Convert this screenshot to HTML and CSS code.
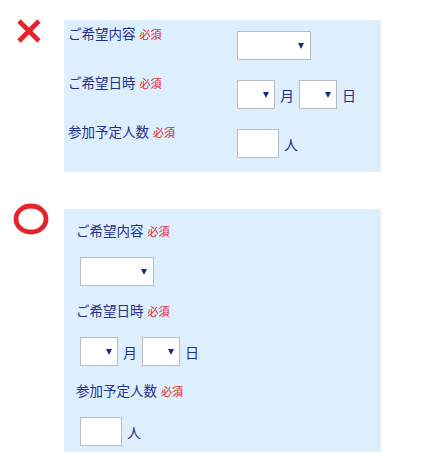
FILE: index.html
```html
<!DOCTYPE html>
<html lang="ja">
<head>
<meta charset="utf-8">
<title>フォーム例</title>
<link rel="stylesheet" href="styles.css">
</head>
<body>
<div class="block block-bad">
  <div class="mark">
    <svg class="mark-x" width="26" height="26" viewBox="0 0 26 26"><path d="M3 3 L23 23 M23 3 L3 23" stroke="#e5232a" stroke-width="4.6" stroke-linecap="butt" fill="none"/></svg>
  </div>
  <div class="panel panel-table">
    <div class="label">ご希望内容<span class="req">必須</span></div>
    <div class="ctrl"><div class="select wide"><span class="arrow"></span></div></div>
    <div class="label">ご希望日時<span class="req">必須</span></div>
    <div class="ctrl"><div class="select small"><span class="arrow"></span></div><span class="unit">月</span><div class="select small"><span class="arrow"></span></div><span class="unit">日</span></div>
    <div class="label">参加予定人数<span class="req">必須</span></div>
    <div class="ctrl"><div class="input"></div><span class="unit">人</span></div>
  </div>
</div>
<div class="block block-good">
  <div class="mark">
    <svg class="mark-o" width="38" height="34" viewBox="0 0 38 34"><ellipse cx="19" cy="17" rx="15" ry="13" stroke="#e5232a" stroke-width="4.8" fill="none"/></svg>
  </div>
  <div class="panel panel-stack">
    <div class="field">
      <div class="label">ご希望内容<span class="req">必須</span></div>
      <div class="ctrl"><div class="select wide"><span class="arrow"></span></div></div>
    </div>
    <div class="field">
      <div class="label">ご希望日時<span class="req">必須</span></div>
      <div class="ctrl"><div class="select small"><span class="arrow"></span></div><span class="unit">月</span><div class="select small"><span class="arrow"></span></div><span class="unit">日</span></div>
    </div>
    <div class="field">
      <div class="label">参加予定人数<span class="req">必須</span></div>
      <div class="ctrl"><div class="input"></div><span class="unit">人</span></div>
    </div>
  </div>
</div>
</body>
</html>
```
FILE: styles.css
```css
* { box-sizing: border-box; }
html, body { margin: 0; padding: 0; background: #fff; }
body {
  font-family: "Noto Sans CJK JP", "Noto Sans", sans-serif;
  color: #26308a;
  font-size: 13.5px;
  padding-top: 18px;
}
.block { display: flex; align-items: flex-start; }
.mark { width: 64px; flex: none; }
.mark svg { display: block; }
.mark-x { margin-left: 16px; margin-top: 0; }
.block-bad .panel { margin-top: 2px; }
.block-good { margin-top: 37px; }
.mark-o { margin-left: 12px; margin-top: -7px; }

.panel { width: 317px; background: #ddeefd; }

.label { line-height: 20px; white-space: nowrap; }
.req { color: #e0202a; font-size: 11px; margin-left: 4px; }

.ctrl { display: flex; align-items: center; }
.unit { font-size: 14px; margin: 0 5px; }

.select {
  height: 29px;
  background: #fff;
  border: 1px solid #b9bcc2;
  display: flex;
  align-items: center;
  justify-content: flex-end;
  padding-right: 6px;
}
.select.wide { width: 74px; }
.select.small { width: 38px; padding-right: 5px; }
.arrow {
  width: 0; height: 0;
  border-left: 3.5px solid transparent;
  border-right: 3.5px solid transparent;
  border-top: 6px solid #1c2a86;
}
.input {
  width: 42px; height: 29px;
  background: #fff;
  border: 1px solid #b9bcc2;
}

.panel-table {
  display: grid;
  grid-template-columns: 169px auto;
  row-gap: 12px;
  padding: 3px 0 14px 4px;
}
.panel-table .label { align-self: start; }
.panel-table .ctrl { padding-top: 8px; }

.panel-stack { padding: 11px 0 6px 12px; }
.panel-stack .field + .field { margin-top: 14px; }
.panel-stack .ctrl { margin-top: 16px; margin-left: 4px; }
```
